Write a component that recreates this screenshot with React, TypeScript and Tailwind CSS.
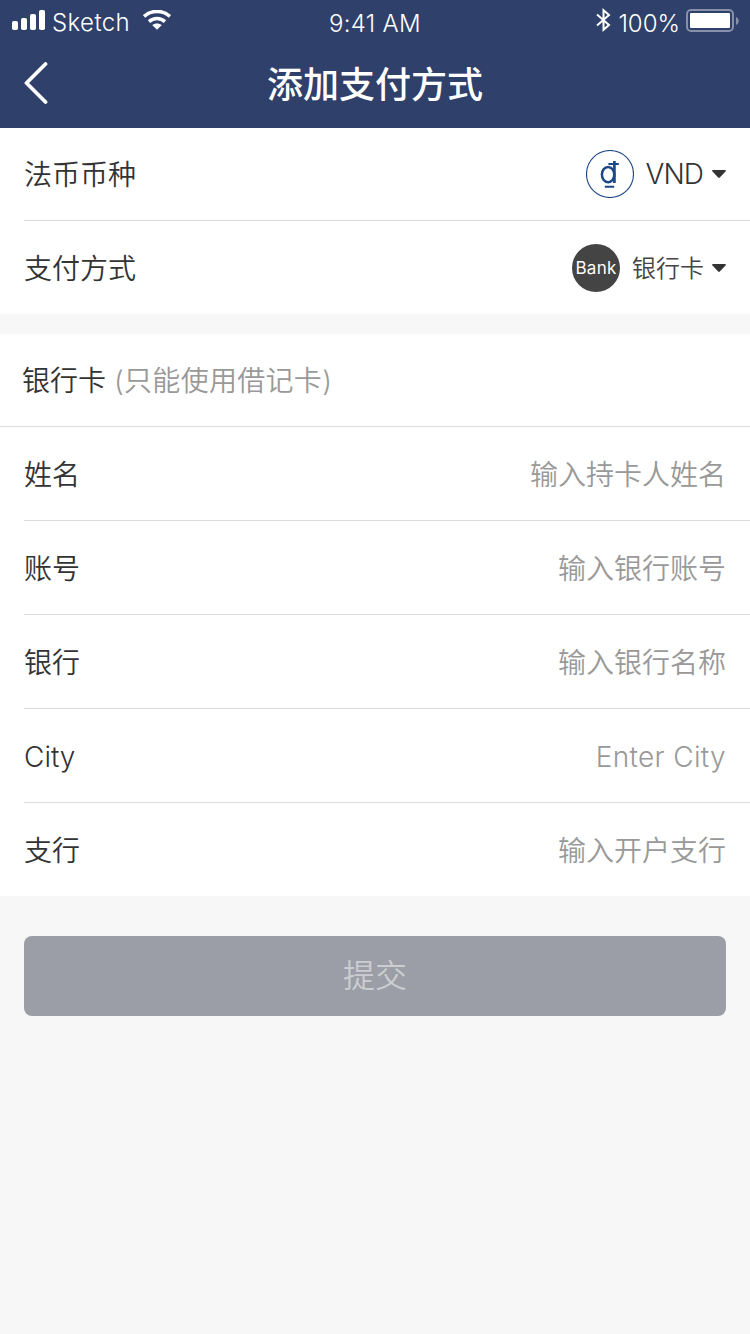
import type { ReactNode } from "react";

function SignalIcon() {
  return (
    <svg width="34" height="20" viewBox="0 0 34 20" fill="#fff">
      <rect x="0" y="11" width="6" height="9" rx="1.8" />
      <rect x="9" y="8" width="6" height="12" rx="1.8" />
      <rect x="18" y="4" width="6" height="16" rx="1.8" />
      <rect x="27" y="0" width="6" height="20" rx="1.8" />
    </svg>
  );
}

function WifiIcon() {
  return (
    <svg width="28" height="20" viewBox="0 0 28 20" fill="none" stroke="#fff">
      <path d="M1 6.4C8.2 -0.2 19.8 -0.2 27 6.4" strokeWidth="3.6" />
      <path d="M6 11.6C10.6 7.4 17.4 7.4 22 11.6" strokeWidth="3.5" />
      <path d="M14 19.8L9.2 15.1C11.9 12.9 16.1 12.9 18.8 15.1Z" fill="#fff" stroke="none" />
    </svg>
  );
}

function BluetoothIcon() {
  return (
    <svg width="16" height="24" viewBox="0 0 16 24" fill="none" stroke="#fff" strokeWidth="2">
      <path d="M1 6.5L13 17L7.5 21.8V2.2L13 7L1 17.5" />
    </svg>
  );
}

function BatteryIcon() {
  return (
    <svg width="54" height="24" viewBox="0 0 54 24">
      <rect x="1" y="1" width="46" height="21" rx="4" fill="none" stroke="#fff" strokeOpacity="0.42" strokeWidth="2" />
      <rect x="4" y="4" width="40" height="15" rx="1" fill="#fff" />
      <path d="M50 8C53.6 9.2 53.6 14.8 50 16Z" fill="#fff" fillOpacity="0.42" />
    </svg>
  );
}

function Caret() {
  return (
    <svg className="ml-2" width="14" height="8" viewBox="0 0 14 8" fill="#333">
      <path d="M0.8 0H13.2Q14.4 0.3 13.5 1.4L7.8 7.5Q7 8.3 6.2 7.5L0.5 1.4Q-0.4 0.3 0.8 0Z" />
    </svg>
  );
}

function DongIcon() {
  return (
    <svg width="48" height="48" viewBox="0 0 48 48" fill="none" stroke="#1d4886">
      <circle cx="24" cy="24" r="23.5" strokeWidth="1.1" />
      <ellipse cx="22.1" cy="24.6" rx="6.2" ry="7.7" strokeWidth="2.5" />
      <path d="M28.4 11V33" strokeWidth="2.7" />
      <path d="M22.4 14.1H32.8M18.8 36.7H28.2" strokeWidth="2" />
    </svg>
  );
}

function Row({ label, children, last }: { label: string; children: ReactNode; last?: boolean }) {
  return (
    <div className={`ml-6 flex items-center justify-between pr-6 pt-px ${last ? "h-[93px]" : "h-[94px] border-b border-[#dcdcdc]"}`}>
      <span className="pt-px text-[#333]">{label}</span>
      {children}
    </div>
  );
}

const fields = [
  { label: "姓名", hint: "输入持卡人姓名" },
  { label: "账号", hint: "输入银行账号" },
  { label: "银行", hint: "输入银行名称" },
  { label: "City", hint: "Enter City" },
  { label: "支行", hint: "输入开户支行" },
];

export default function App() {
  return (
    <div className="min-h-[1334px] w-[750px] bg-[#f7f7f7] font-['Inter','Noto_Sans_CJK_SC',sans-serif] text-[28px] leading-[40px] font-[350]">
      <header className="h-32 bg-[#2f406b] text-white">
        <div className="grid h-10 grid-cols-3 text-2xl leading-[30px] font-[350]">
          <div className="flex items-start pl-3 pt-[10px]">
            <SignalIcon />
            <span className="-mt-[2px] ml-[6px] tracking-[0.4px]">Sketch</span>
            <span className="ml-[13px]"><WifiIcon /></span>
          </div>
          <span className="pt-[9px] text-center tracking-[0.3px]">9:41 AM</span>
          <div className="flex items-start justify-end pr-[10px] pt-2">
            <BluetoothIcon />
            <span className="mx-[6px] pt-px">100%</span>
            <span className="mt-px"><BatteryIcon /></span>
          </div>
        </div>
        <div className="grid h-[88px] grid-cols-[1fr_auto_1fr] items-center">
          <svg className="mb-[2px] ml-6" width="25" height="42" viewBox="0 0 25 42" fill="none" stroke="#fff" strokeWidth="3.8" strokeLinecap="round" strokeLinejoin="round">
            <path d="M21.5 2L2.5 21L21.5 40" />
          </svg>
          <h1 className="pt-[2px] text-4xl leading-[50px] font-medium">添加支付方式</h1>
        </div>
      </header>

      <section className="bg-white">
        <div className="ml-6 flex h-[93px] items-center justify-between border-b border-[#dcdcdc] pr-6">
          <span className="pt-px text-[#333]">法币币种</span>
          <div className="flex items-center text-[#333]">
            <DongIcon />
            <span className="ml-[11px] mr-px tracking-[-0.9px]">VND</span>
            <Caret />
          </div>
        </div>
        <Row label="支付方式" last>
          <div className="flex items-center text-2xl text-[#444]">
            <span className="flex size-12 items-center justify-center rounded-full bg-[#444] text-[17px] font-normal tracking-[0.3px] text-white">Bank</span>
            <span className="ml-3 pt-px">银行卡</span>
            <Caret />
          </div>
        </Row>
      </section>

      <section className="mt-5 bg-white">
        <div className="flex h-[93px] items-center border-b border-[#dcdcdc] pt-px pl-[22px]">
          <span className="text-[#333]">银行卡</span>
          <span className="ml-2 text-[#999] tracking-[0.3px]">(只能使用借记卡)</span>
        </div>
        {fields.map((field, index) => (
          <Row key={field.label} label={field.label} last={index === fields.length - 1}>
            <span className={`pt-px text-[#999] ${field.label === "City" ? "tracking-[0.35px]" : ""}`}>{field.hint}</span>
          </Row>
        ))}
      </section>

      <div className="px-6 pt-10">
        <button className="h-20 w-full rounded-lg bg-[#9b9ea6] text-[32px] text-[#cccdd1]">提交</button>
      </div>
    </div>
  );
}
